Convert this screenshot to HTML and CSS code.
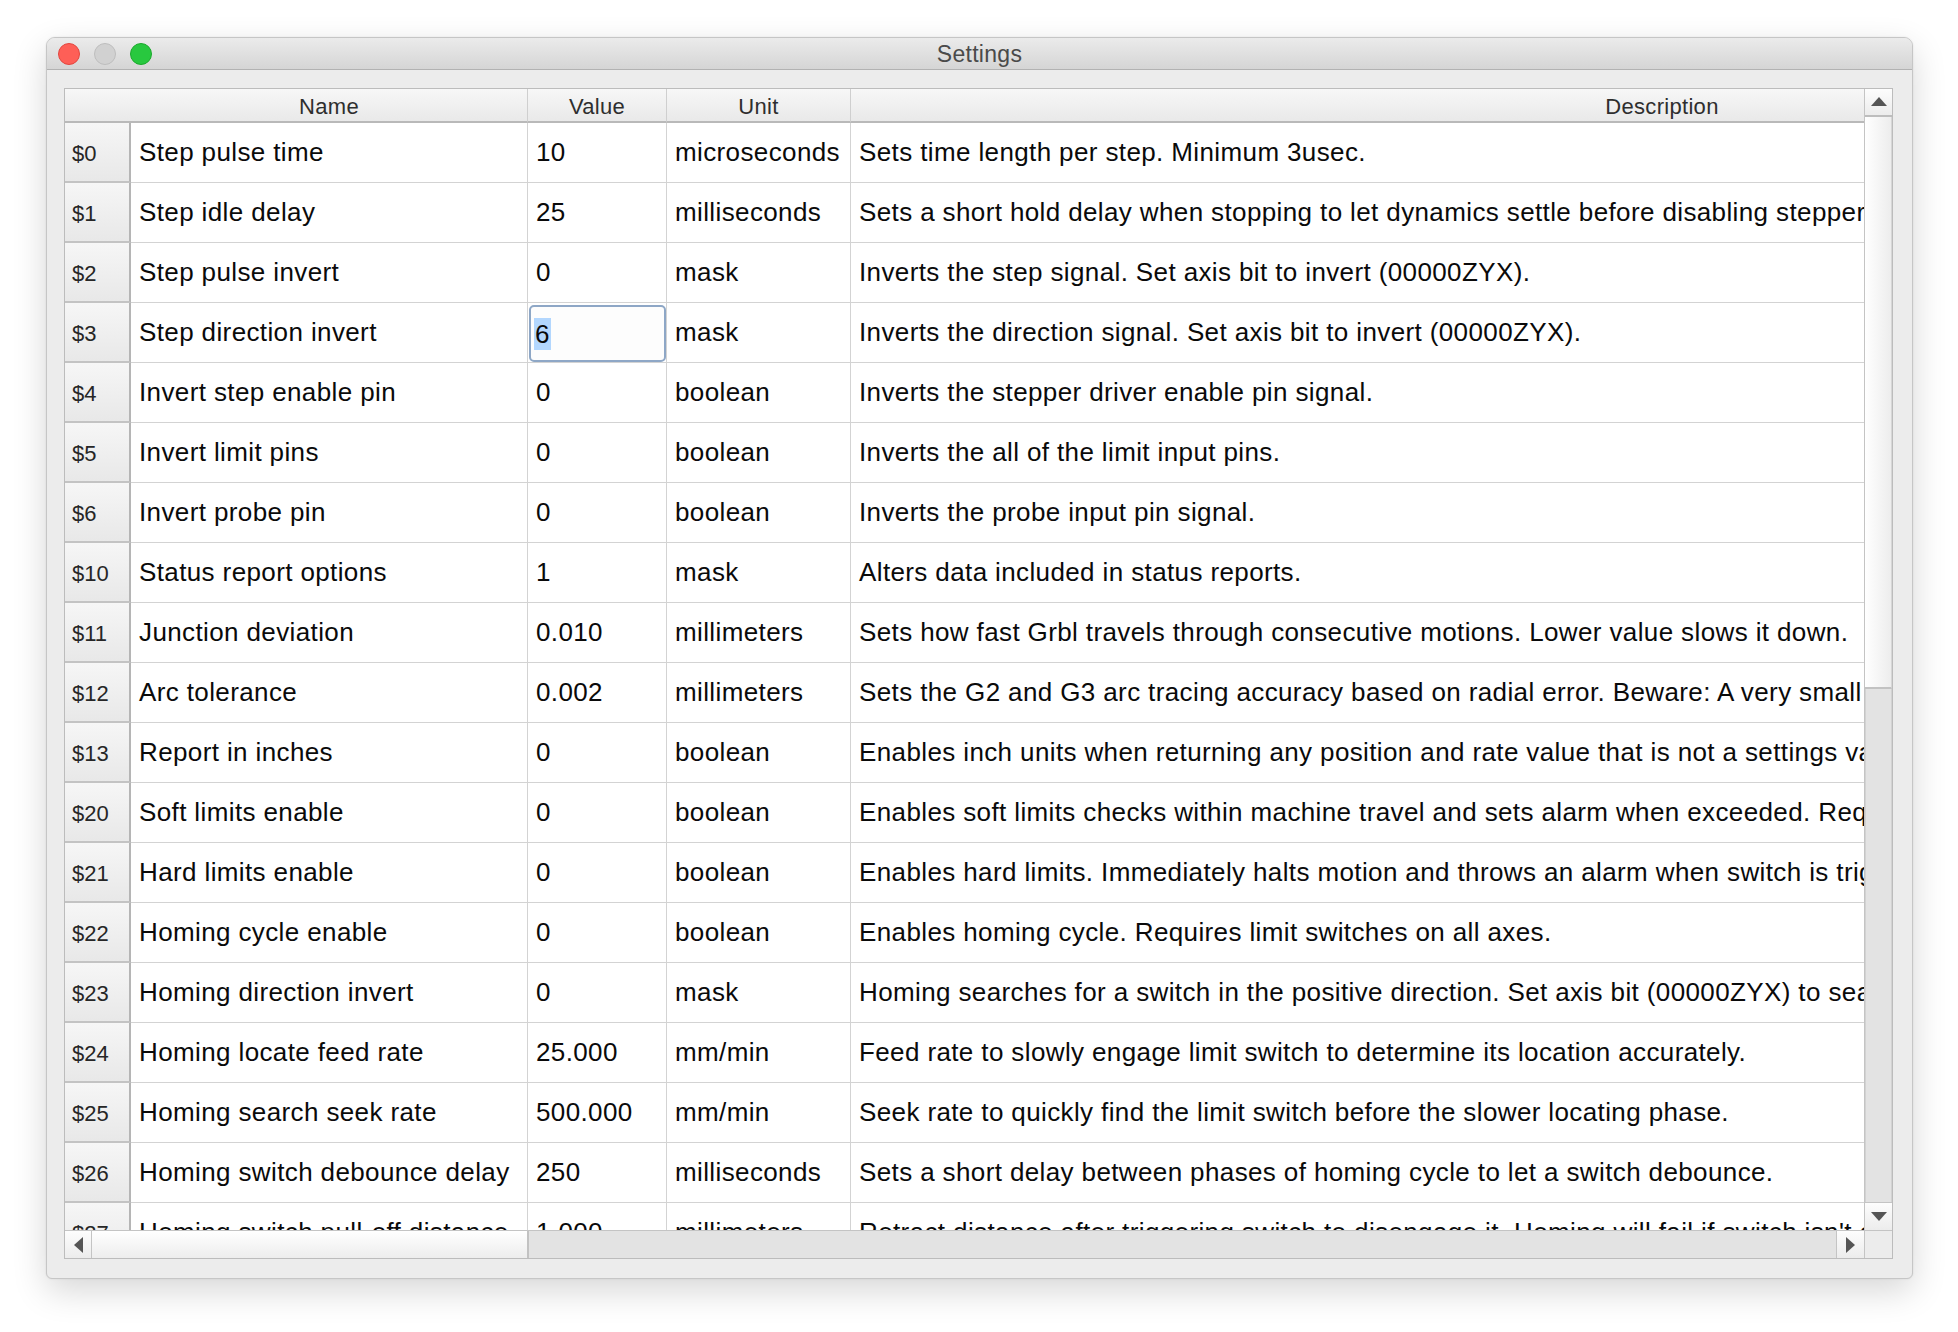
FILE: index.html
```html
<!DOCTYPE html>
<html>
<head>
<meta charset="utf-8">
<title>Settings</title>
<link rel="stylesheet" href="styles.css">
</head>
<body>
<div class="window">
  <div class="titlebar">
    <div class="lights">
      <span class="light red"></span>
      <span class="light idle"></span>
      <span class="light green"></span>
    </div>
    <div class="title">Settings</div>
    <div class="spacer"></div>
  </div>
  <div class="content">
    <div class="frame">
      <div class="viewport">
        <div class="table">
          <div class="hcell hcorner"></div>
          <div class="hcell">Name</div>
          <div class="hcell">Value</div>
          <div class="hcell">Unit</div>
          <div class="hcell hlast">Description</div>

          <div class="rh">$0</div><div class="c">Step pulse time</div><div class="c">10</div><div class="c">microseconds</div><div class="c">Sets time length per step. Minimum 3usec.</div>
          <div class="rh">$1</div><div class="c">Step idle delay</div><div class="c">25</div><div class="c">milliseconds</div><div class="c">Sets a short hold delay when stopping to let dynamics settle before disabling stepper motors. The value 255 keeps motors enabled with no delay.</div>
          <div class="rh">$2</div><div class="c">Step pulse invert</div><div class="c">0</div><div class="c">mask</div><div class="c">Inverts the step signal. Set axis bit to invert (00000ZYX).</div>
          <div class="rh">$3</div><div class="c">Step direction invert</div><div class="c c-edit"><div class="editor"><span class="sel">6</span></div></div><div class="c">mask</div><div class="c">Inverts the direction signal. Set axis bit to invert (00000ZYX).</div>
          <div class="rh">$4</div><div class="c">Invert step enable pin</div><div class="c">0</div><div class="c">boolean</div><div class="c">Inverts the stepper driver enable pin signal.</div>
          <div class="rh">$5</div><div class="c">Invert limit pins</div><div class="c">0</div><div class="c">boolean</div><div class="c">Inverts the all of the limit input pins.</div>
          <div class="rh">$6</div><div class="c">Invert probe pin</div><div class="c">0</div><div class="c">boolean</div><div class="c">Inverts the probe input pin signal.</div>
          <div class="rh">$10</div><div class="c">Status report options</div><div class="c">1</div><div class="c">mask</div><div class="c">Alters data included in status reports.</div>
          <div class="rh">$11</div><div class="c">Junction deviation</div><div class="c">0.010</div><div class="c">millimeters</div><div class="c">Sets how fast Grbl travels through consecutive motions. Lower value slows it down.</div>
          <div class="rh">$12</div><div class="c">Arc tolerance</div><div class="c">0.002</div><div class="c">millimeters</div><div class="c">Sets the G2 and G3 arc tracing accuracy based on radial error. Beware: A very small value may effect performance.</div>
          <div class="rh">$13</div><div class="c">Report in inches</div><div class="c">0</div><div class="c">boolean</div><div class="c">Enables inch units when returning any position and rate value that is not a settings value.</div>
          <div class="rh">$20</div><div class="c">Soft limits enable</div><div class="c">0</div><div class="c">boolean</div><div class="c">Enables soft limits checks within machine travel and sets alarm when exceeded. Requires homing.</div>
          <div class="rh">$21</div><div class="c">Hard limits enable</div><div class="c">0</div><div class="c">boolean</div><div class="c">Enables hard limits. Immediately halts motion and throws an alarm when switch is triggered.</div>
          <div class="rh">$22</div><div class="c">Homing cycle enable</div><div class="c">0</div><div class="c">boolean</div><div class="c">Enables homing cycle. Requires limit switches on all axes.</div>
          <div class="rh">$23</div><div class="c">Homing direction invert</div><div class="c">0</div><div class="c">mask</div><div class="c">Homing searches for a switch in the positive direction. Set axis bit (00000ZYX) to search in negative direction.</div>
          <div class="rh">$24</div><div class="c">Homing locate feed rate</div><div class="c">25.000</div><div class="c">mm/min</div><div class="c">Feed rate to slowly engage limit switch to determine its location accurately.</div>
          <div class="rh">$25</div><div class="c">Homing search seek rate</div><div class="c">500.000</div><div class="c">mm/min</div><div class="c">Seek rate to quickly find the limit switch before the slower locating phase.</div>
          <div class="rh">$26</div><div class="c">Homing switch debounce delay</div><div class="c">250</div><div class="c">milliseconds</div><div class="c">Sets a short delay between phases of homing cycle to let a switch debounce.</div>
          <div class="rh">$27</div><div class="c">Homing switch pull-off distance</div><div class="c">1.000</div><div class="c">millimeters</div><div class="c">Retract distance after triggering switch to disengage it. Homing will fail if switch isn't cleared.</div>
        </div>
      </div>
      <div class="vscroll">
        <div class="sbtn sbtn-up"><svg width="16" height="9" viewBox="0 0 16 9"><polygon points="0,9 16,9 8,0" fill="#555"/></svg></div>
        <div class="vthumb"></div>
        <div class="vtrack"></div>
        <div class="sbtn sbtn-down"><svg width="16" height="9" viewBox="0 0 16 9"><polygon points="0,0 16,0 8,9" fill="#555"/></svg></div>
      </div>
      <div class="hscroll">
        <div class="sbtn hbtn-left"><svg width="9" height="16" viewBox="0 0 9 16"><polygon points="9,0 9,16 0,8" fill="#555"/></svg></div>
        <div class="hthumb"></div>
        <div class="htrack"></div>
        <div class="sbtn hbtn-right"><svg width="9" height="16" viewBox="0 0 9 16"><polygon points="0,0 0,16 9,8" fill="#555"/></svg></div>
      </div>
      <div class="scorner"></div>
    </div>
  </div>
</div>
</body>
</html>
```
FILE: styles.css
```css
* { box-sizing: border-box; }
html, body { margin: 0; padding: 0; background: #ffffff; }
body {
  width: 1958px;
  height: 1332px;
  overflow: hidden;
  font-family: "Liberation Sans", Arial, sans-serif;
  padding: 37px 0 0 46px;
}
.window {
  width: 1867px;
  height: 1242px;
  border: 1px solid #c6c6c6;
  border-radius: 9px 9px 6px 6px;
  background: #ececec;
  box-shadow: 0 12px 34px rgba(0,0,0,0.16), 0 0 2px rgba(0,0,0,0.10);
  display: flex;
  flex-direction: column;
  overflow: hidden;
}
.titlebar {
  height: 32px;
  flex: none;
  display: grid;
  grid-template-columns: 1fr auto 1fr;
  align-items: center;
  background: linear-gradient(#ebebeb, #d5d5d5);
  border-bottom: 1px solid #b2b2b2;
}
.lights { display: flex; gap: 14px; padding-left: 11px; }
.light {
  width: 22px; height: 22px; border-radius: 50%;
  display: block;
}
.red { background: #fe5f57; border: 1px solid #e2463f; }
.idle { background: #d1d1d1; border: 1px solid #bdbdbd; }
.green { background: #28c83f; border: 1px solid #1ba92c; }
.title {
  font-size: 23px;
  color: #4a4a4a;
  letter-spacing: 0.3px;
  padding-top: 2px;
}
.content {
  flex: 1;
  padding: 18px 0 0 17px;
}
.frame {
  width: 1829px;
  height: 1171px;
  border: 1px solid #bcbcbc;
  background: #ffffff;
  display: grid;
  grid-template-columns: 1799px 28px;
  grid-template-rows: 1141px 28px;
}
.viewport { overflow: hidden; position: relative; }
.table {
  display: grid;
  grid-template-columns: 66px 397px 139px 184px 1622px;
  grid-template-rows: 34px;
  grid-auto-rows: 60px;
  width: 2408px;
}
.hcell {
  background: linear-gradient(#f7f7f7, #e9e9e9);
  border-bottom: 2px solid #b9b9b9;
  border-right: 1px solid #cfcfcf;
  font-size: 22px;
  letter-spacing: 0.3px;
  color: #2e2e2e;
  display: flex;
  align-items: center;
  justify-content: center;
  padding-top: 4px;
}
.hcorner { border-right: none; }
.hlast { border-right: none; }
.rh {
  background: linear-gradient(#f6f6f6, #e8e8e8);
  border-right: 2px solid #b5b5b5;
  border-bottom: 2px solid #c3c3c3;
  font-size: 22px;
  color: #262626;
  display: flex;
  align-items: center;
  padding: 3px 0 0 7px;
}
.c {
  border-right: 1px solid #d3d3d3;
  border-bottom: 1px solid #d3d3d3;
  font-size: 26px;
  letter-spacing: 0.38px;
  color: #0a0a0a;
  display: flex;
  align-items: center;
  padding-left: 8px;
  white-space: nowrap;
  overflow: hidden;
}
.c-edit { padding: 2px 0 0 1px; align-items: flex-start; }
.editor {
  width: 137px;
  height: 57px;
  border: 2px solid #8ea7c6;
  border-radius: 5px;
  background: #fdfdfd;
  display: flex;
  align-items: center;
  padding-left: 3px;
}
.sel { background: #b3d7fe; padding: 0 1px; line-height: 32px; }
.vscroll {
  border-left: 1px solid #c4c4c4;
  display: flex;
  flex-direction: column;
  background: #ececec;
}
.sbtn {
  display: flex;
  align-items: center;
  justify-content: center;
  background: linear-gradient(#fdfdfd, #ececec);
  flex: none;
}
.sbtn-up { height: 28px; border-bottom: 2px solid #bdbdbd; padding-bottom: 2px; }
.vthumb {
  height: 572px;
  background: linear-gradient(90deg, #ffffff, #ededed);
  border-right: 1px solid #d6d6d6;
  border-bottom: 2px solid #c2c2c2;
}
.vtrack {
  flex: 1;
  background: #e3e3e3;
  border-left: 1px solid #d2d2d2;
  border-right: 1px solid #d2d2d2;
}
.sbtn-down { height: 28px; border-top: 1px solid #c4c4c4; }
.hscroll {
  border-top: 1px solid #c4c4c4;
  display: flex;
  background: #ececec;
}
.hbtn-left { width: 27px; border-right: 1px solid #c4c4c4; }
.hthumb {
  width: 437px;
  background: linear-gradient(#ffffff, #ededed);
  border-right: 2px solid #c2c2c2;
}
.htrack {
  flex: 1;
  background: #e3e3e3;
}
.hbtn-right { width: 28px; border-left: 1px solid #c4c4c4; }
.scorner {
  border-left: 1px solid #c4c4c4;
  border-top: 1px solid #c4c4c4;
  background: #ececec;
}
```
